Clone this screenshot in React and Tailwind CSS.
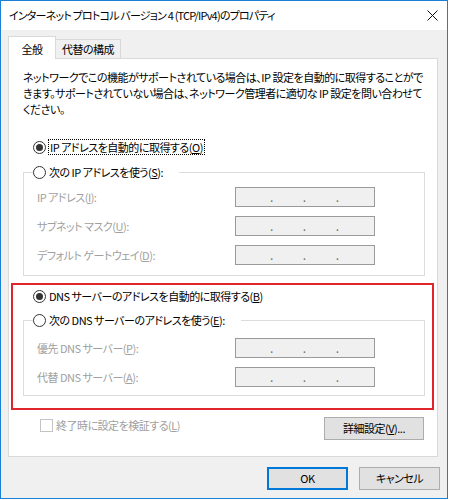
import React from "react";

const jp = "font-['Noto_Sans_CJK_JP','Noto_Sans_CJK_SC',sans-serif] [font-feature-settings:'palt']";

function Radio({ checked }) {
  return (
    <span className="flex h-[13px] w-[13px] shrink-0 items-center justify-center rounded-full border border-[#333333] bg-white">
      {checked && <span className="h-[7px] w-[7px] rounded-full bg-[#333333]" />}
    </span>
  );
}

function IpBox() {
  return (
    <div className="flex h-[20px] w-[140px] shrink-0 items-center gap-[30px] border border-[#9a9a9a] bg-[#f0f0f0] pl-[34px] text-[12px] leading-none text-[#707070]">
      <span>.</span>
      <span>.</span>
      <span>.</span>
    </div>
  );
}

function IpRow({ label, keyChar, tail }) {
  return (
    <div className="flex items-center">
      <span className="w-[198px] text-[#a0a0a0]">
        {label}(<u>{keyChar}</u>){tail}
      </span>
      <IpBox />
    </div>
  );
}

function Button({ children, primary, className = "" }) {
  return (
    <button
      className={`flex h-[23px] items-center justify-center bg-[#e1e1e1] text-black ${
        primary ? "border-2 border-[#0078d7]" : "border border-[#adadad]"
      } ${className}`}
    >
      {children}
    </button>
  );
}

export default function App() {
  return (
    <div className={`h-[499px] w-[448px] border border-[#1a80d6] bg-[#f0f0f0] text-[11px] tracking-[-0.5px] text-black ${jp}`}>
      {/* Title bar */}
      <div className="flex h-[29px] items-center justify-between bg-white pl-[8px] pr-[9px]">
        <span className="leading-none tracking-[-0.8px]">インターネット プロトコル バージョン 4 (TCP/IPv4)のプロパティ</span>
        <svg width="11" height="11" viewBox="0 0 11 11">
          <path d="M0.5 0.5 L10.5 10.5 M10.5 0.5 L0.5 10.5" stroke="#111" strokeWidth="1" fill="none" />
        </svg>
      </div>

      <div className="pl-[7px] pt-[6px]">
        {/* Tabs */}
        <div className="flex items-end">
          <div className="relative z-10 -mb-px flex h-[23px] w-[48px] items-start justify-center border border-b-0 border-[#d9d9d9] bg-white pt-[4px]">
            全般
          </div>
          <div className="flex h-[19px] w-[65px] items-center justify-center border border-b-0 border-l-0 border-[#d9d9d9] bg-[#f0f0f0]">
            代替の構成
          </div>
        </div>

        {/* Panel */}
        <div className="relative flex h-[399px] w-[430px] flex-col border border-[#d9d9d9] bg-white pl-[14px] pr-[12px]">
          <p className="mt-[10px] whitespace-nowrap leading-[16px]">
            ネットワークでこの機能がサポートされている場合は、IP 設定を自動的に取得することがで
            <br />
            きます。サポートされていない場合は、ネットワーク管理者に適切な IP 設定を問い合わせて
            <br />
            ください。
          </p>

          <div className="ml-[10px] mt-[22px] flex h-[16px] items-center gap-[2px]">
            <Radio checked />
            <span className="border border-dotted border-black px-px leading-[14px]">
              IP アドレスを自動的に取得する(<u>O</u>)
            </span>
          </div>

          <fieldset className="mt-[9px] border border-[#dcdcdc] p-0">
            <legend className="ml-[9px] flex h-[16px] items-center gap-[3px] pr-[16px]">
              <Radio />
              <span>
                次の IP アドレスを使う(<u>S</u>):
              </span>
            </legend>
            <div className="flex flex-col gap-[9px] pb-[10px] pl-[13px] pt-[7px]">
              <IpRow label="IP アドレス" keyChar="I" tail=":" />
              <IpRow label="サブネット マスク" keyChar="U" tail=":" />
              <IpRow label="デフォルト ゲートウェイ" keyChar="D" tail=":" />
            </div>
          </fieldset>

          <div className="ml-[10px] mt-[12px] flex h-[16px] items-center gap-[3px]">
            <Radio checked />
            <span>
              DNS サーバーのアドレスを自動的に取得する(<u>B</u>)
            </span>
          </div>

          <fieldset className="mt-[8px] border border-[#dcdcdc] p-0">
            <legend className="ml-[9px] flex h-[16px] items-center gap-[3px] pr-[16px]">
              <Radio />
              <span>
                次の DNS サーバーのアドレスを使う(<u>E</u>):
              </span>
            </legend>
            <div className="flex flex-col gap-[9px] pb-[8px] pl-[13px] pt-[10px]">
              <IpRow label="優先 DNS サーバー" keyChar="P" tail=":" />
              <IpRow label="代替 DNS サーバー" keyChar="A" tail=":" />
            </div>
          </fieldset>

          <div className="mt-[21px] flex items-start justify-between pl-[17px] pr-px">
            <div className="mt-[2px] flex items-center gap-[3px] text-[#a0a0a0]">
              <span className="h-[13px] w-[13px] border border-[#c4c4c4] bg-white" />
              <span className="leading-[13px]">
                終了時に設定を検証する(<u>L</u>)
              </span>
            </div>
            <Button className="h-[22px] w-[100px]">
              詳細設定(<u>V</u>)...
            </Button>
          </div>

          {/* highlight */}
          <div className="pointer-events-none absolute left-[2px] top-[224px] h-[127px] w-[423px] border-2 border-[#e0262b]" />
        </div>

        {/* Footer buttons */}
        <div className="mt-[10px] flex justify-end gap-[11px] pr-[7px]">
          <Button primary className="w-[81px]">
            OK
          </Button>
          <Button className="w-[81px]">キャンセル</Button>
        </div>
      </div>
    </div>
  );
}
